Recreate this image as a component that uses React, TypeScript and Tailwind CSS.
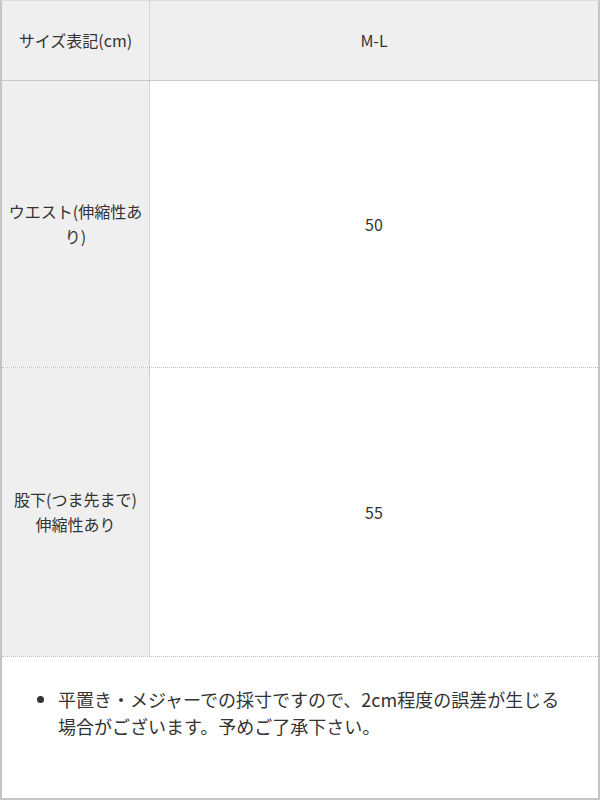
import React from "react";

const rows = [
  { label: <>ウエスト(伸縮性あり)</>, value: "50", h: "h-[287px]" },
  { label: <>股下(つま先まで)<br />伸縮性あり</>, value: "55", h: "h-[289px]" },
];

export default function App() {
  return (
    <div
      className="w-[600px] h-[800px] flex flex-col border-2 border-t border-[#c4c4c4] border-t-[#dcdcdc] bg-white text-[#333] text-[16px] leading-[25px]"
      style={{ fontFamily: '"Noto Sans CJK JP", "Noto Sans", sans-serif' }}
    >
      <div className="flex h-[80px] bg-[#efefef] border-b border-[#c8c8c8]">
        <div className="w-[148px] flex items-center justify-center px-[6px] text-center border-r border-dotted border-[#bdbdbd]">
          サイズ表記(cm)
        </div>
        <div className="flex-1 flex items-center justify-center">M-L</div>
      </div>
      {rows.map((r) => (
        <div key={r.value} className={`flex ${r.h} border-b border-dotted border-[#bdbdbd]`}>
          <div className="w-[148px] flex items-center justify-center px-[6px] text-center bg-[#efefef] border-r border-dotted border-[#bdbdbd]">
            <span>{r.label}</span>
          </div>
          <div className="flex-1 flex items-center justify-center">{r.value}</div>
        </div>
      ))}
      <div className="flex-1 pt-[29px] pl-[38px] pr-[35px]">
        <ul className="list-disc pl-[18px] text-[18px] leading-[27px]">
          <li>平置き・メジャーでの採寸ですので、2cm程度の誤差が生じる場合がございます。予めご了承下さい。</li>
        </ul>
      </div>
    </div>
  );
}
